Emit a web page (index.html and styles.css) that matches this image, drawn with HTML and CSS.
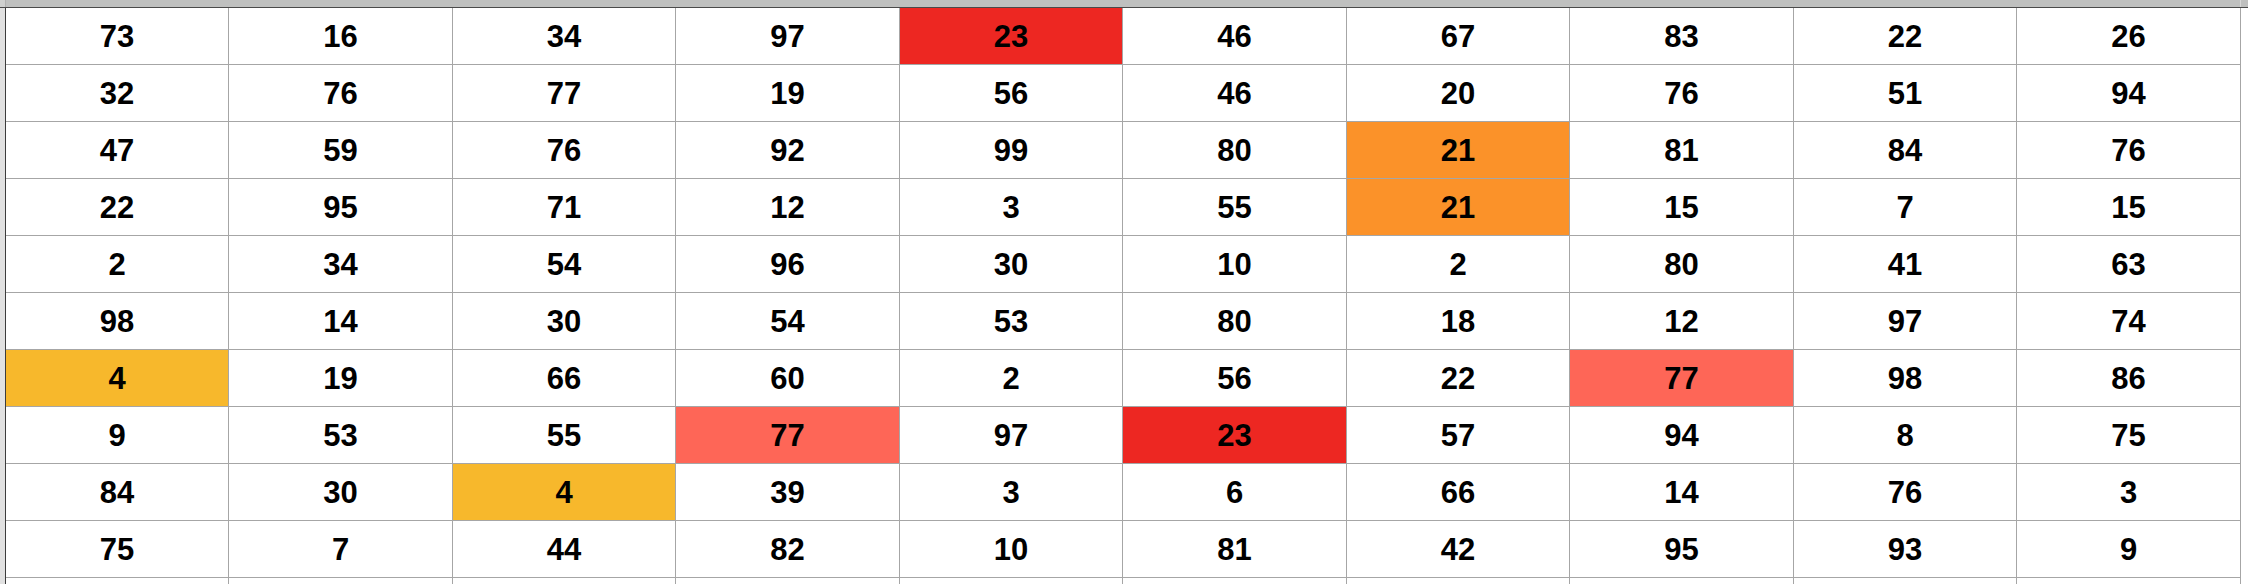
FILE: index.html
```html
<!DOCTYPE html>
<html>
<head>
<meta charset="utf-8">
<link rel="stylesheet" href="styles.css">
</head>
<body>
<div class="sheet">
  <div class="colhead"><div class="corner"></div><div class="heads"></div><div class="tail"></div></div>
  <div class="body">
    <div class="rowhead"></div>
    <div class="grid">
      <div class="c">73</div><div class="c">16</div><div class="c">34</div><div class="c">97</div><div class="c red">23</div><div class="c">46</div><div class="c">67</div><div class="c">83</div><div class="c">22</div><div class="c">26</div>
      <div class="c">32</div><div class="c">76</div><div class="c">77</div><div class="c">19</div><div class="c">56</div><div class="c">46</div><div class="c">20</div><div class="c">76</div><div class="c">51</div><div class="c">94</div>
      <div class="c">47</div><div class="c">59</div><div class="c">76</div><div class="c">92</div><div class="c">99</div><div class="c">80</div><div class="c orange">21</div><div class="c">81</div><div class="c">84</div><div class="c">76</div>
      <div class="c">22</div><div class="c">95</div><div class="c">71</div><div class="c">12</div><div class="c">3</div><div class="c">55</div><div class="c orange">21</div><div class="c">15</div><div class="c">7</div><div class="c">15</div>
      <div class="c">2</div><div class="c">34</div><div class="c">54</div><div class="c">96</div><div class="c">30</div><div class="c">10</div><div class="c">2</div><div class="c">80</div><div class="c">41</div><div class="c">63</div>
      <div class="c">98</div><div class="c">14</div><div class="c">30</div><div class="c">54</div><div class="c">53</div><div class="c">80</div><div class="c">18</div><div class="c">12</div><div class="c">97</div><div class="c">74</div>
      <div class="c yellow">4</div><div class="c">19</div><div class="c">66</div><div class="c">60</div><div class="c">2</div><div class="c">56</div><div class="c">22</div><div class="c salmon">77</div><div class="c">98</div><div class="c">86</div>
      <div class="c">9</div><div class="c">53</div><div class="c">55</div><div class="c salmon">77</div><div class="c">97</div><div class="c red">23</div><div class="c">57</div><div class="c">94</div><div class="c">8</div><div class="c">75</div>
      <div class="c">84</div><div class="c">30</div><div class="c yellow">4</div><div class="c">39</div><div class="c">3</div><div class="c">6</div><div class="c">66</div><div class="c">14</div><div class="c">76</div><div class="c">3</div>
      <div class="c">75</div><div class="c">7</div><div class="c">44</div><div class="c">82</div><div class="c">10</div><div class="c">81</div><div class="c">42</div><div class="c">95</div><div class="c">93</div><div class="c">9</div>
      <div class="c"></div><div class="c"></div><div class="c"></div><div class="c"></div><div class="c"></div><div class="c"></div><div class="c"></div><div class="c"></div><div class="c"></div><div class="c"></div>
    </div>
  </div>
</div>
</body>
</html>
```
FILE: styles.css
```css
html, body {
  margin: 0;
  padding: 0;
  background: #ffffff;
  overflow: hidden;
}
.sheet {
  width: 2248px;
  height: 584px;
  overflow: hidden;
  font-family: "Liberation Sans", Arial, Helvetica, sans-serif;
}
.colhead {
  display: flex;
  height: 7px;
  border-bottom: 1px solid #4a4a4a;
  background: #bfc0bf;
}
.corner {
  width: 5px;
  background: #cfd0cf;
  border-right: 1px solid #b0b0b0;
}
.heads {
  width: 2234px;
}
.tail {
  flex: 1;
  border-left: 1px solid #d8d8d8;
}
.body {
  display: flex;
}
.rowhead {
  width: 5px;
  background: #e1e1e1;
  border-right: 1px solid #3c3c3c;
}
.grid {
  display: grid;
  grid-template-columns: 223px 224px 223px 224px 223px 224px 223px 224px 223px 224px;
  grid-auto-rows: 57px;
}
.c {
  box-sizing: border-box;
  border-right: 1px solid #a6a6a6;
  border-bottom: 1px solid #a6a6a6;
  text-align: center;
  font-size: 31px;
  font-weight: bold;
  color: #000;
  line-height: 54px;
  padding-top: 2px;
}
.red { background: #ed2722; }
.orange { background: #fb9229; }
.salmon { background: #fe6657; }
.yellow { background: #f7b82c; }
```
